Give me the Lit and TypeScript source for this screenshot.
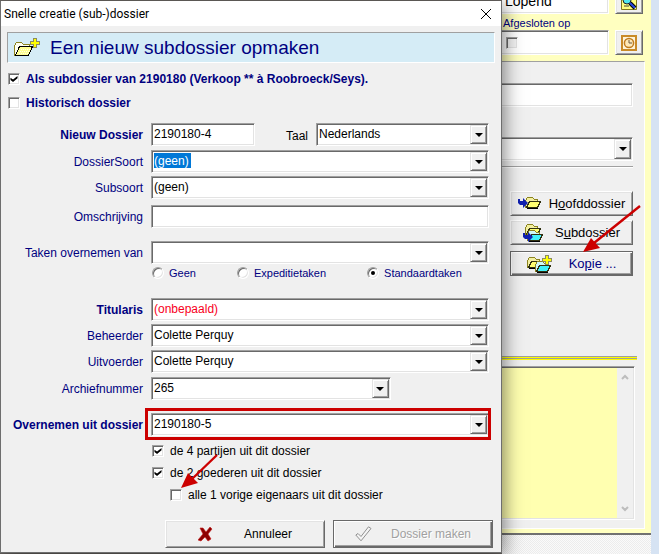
import { LitElement, html, css, svg } from "lit";
import { customElement, state } from "lit/decorators.js";

const YELLOW = "#ffff70";
const CYAN = "#40f0f8";

const folder = (x: number, y: number, front: string, back: string) => svg`
  <g transform="translate(${x} ${y})" shape-rendering="crispEdges">
    <path d="M.5 10.5V3.5L2.500.500H7.500L9.500 2.500H12.500V5.500L9.500 10.500Z" fill="${back}" stroke="#8c8420"/>
    <path d="M4.500 4.500H15.500L12.500 10.500H1.500Z" fill="${front}" stroke="#303010"/>
    <path d="M2 11.500H13" stroke="#000"/>
  </g>`;

const plus = (x: number, y: number) => svg`
  <path transform="translate(${x} ${y})" shape-rendering="crispEdges"
    d="M3.500.500H6.500V3.500H9.500V6.500H6.500V9.500H3.500V6.500H.500V3.500H3.500Z" fill="#ffff00" stroke="#8c8c60"/>`;

const blueArrow = (x: number, y: number) => svg`
  <path transform="translate(${x} ${y})" d="M0 1H2V3H5V0L10 5L5 10V7H2L0 5Z" fill="#1020b0"/>`;

const newIcon = html`<svg width="26" height="20" viewBox="0 0 26 20" aria-hidden="true">
  <g shape-rendering="crispEdges">
    <path d="M.5 17.500V7.500L2.500 4.500H7.500L9.500 6.500H15.500V9.500L10 17.500Z" fill="#fffff0" stroke="#8c8420"/>
    <path d="M5.500 8.500H18.500L14.500 17.500H1.500Z" fill="#ffff90" stroke="#000"/>
    <path d="M7 11H16M6 13H15M5 15H14" stroke="#ffffe8" stroke-dasharray="1 1"/>
  </g>${plus(16, 0)}</svg>`;

const mainIcon = html`<svg width="23" height="14" viewBox="0 0 23 14" aria-hidden="true">
  ${folder(7, 0, YELLOW, "#f4f0a0")}${blueArrow(0, 1)}</svg>`;

const subIcon = html`<svg width="20" height="18" viewBox="0 0 20 18" aria-hidden="true">
  ${folder(2, 0, YELLOW, "#f4f0a0")}${folder(4, 6, CYAN, "#d0f8f8")}${blueArrow(0, 8)}</svg>`;

const copyIcon = html`<svg width="26" height="18" viewBox="0 0 26 18" aria-hidden="true">
  ${folder(0, 2, YELLOW, "#f4f0a0")}${folder(8, 6, CYAN, "#d0f8f8")}${plus(15, 0)}</svg>`;

const searchIcon = html`<svg width="16" height="16" viewBox="0 0 16 16" aria-hidden="true">
  <path d="M.5.5H15.500V15.500H.500Z" fill="#ffff80" stroke="#807820"/>
  <path d="M3 12H8" stroke="#404040"/>
  <circle cx="6" cy="6" r="4" fill="#50e8f0" stroke="#222"/>
  <path d="M9 9L14 14" stroke="#000" stroke-width="4"/>
  <path d="M9 9L14 14" stroke="#2848e0" stroke-width="2"/></svg>`;

const clockIcon = html`<svg width="16" height="16" viewBox="0 0 16 16" aria-hidden="true">
  <path d="M1 1H15V15H1Z" fill="#fff4d8" stroke="#c98a28" stroke-width="2"/>
  <circle cx="8" cy="8" r="4.600" fill="#ffe9b8" stroke="#c07c20" stroke-width="1.500"/>
  <path d="M8 5V8H11" fill="none" stroke="#6a5840"/></svg>`;

const crossIcon = html`<svg width="15" height="15" viewBox="0 0 15 15" aria-hidden="true">
  <path d="M2 1L5 1L8 5L12 0L14 2L10 7L13 12L10 14L7 10L3 14L0 13L5 7Z" fill="#8c0000" stroke="#c81818" stroke-width=".6"/></svg>`;

const checkIcon = html`<svg width="17" height="16" viewBox="0 0 17 16" aria-hidden="true">
  <path d="M.8 9L3 7.500L6 10.500L13.500.800L16 2.500L6 14.800Z" fill="#f4f4f4" stroke="#909090"/></svg>`;

interface Field {
  id: string;
  label: string;
  value: string;
  space: string;
  cls?: string;
  strong?: boolean;
}

@customElement("app-root")
export class AppRoot extends LitElement {
  @state() private tasks = "Standaardtaken";

  static styles = css`
    :host {
      display: flex;
      min-height: 100vh;
      box-sizing: border-box;
      padding-top: 1px;
      overflow: hidden;
      background: #6c6864;
      color: #000;
      font: 12px/14px "Liberation Sans", Arial, sans-serif;
    }
    * { box-sizing: border-box; }
    svg { display: block; flex: none; }
    h1, h2 { margin: 0; font-weight: normal; }
    input, select, textarea, button { font: inherit; color: inherit; margin: 0; border-radius: 0; }

    .dialog {
      position: relative;
      z-index: 1;
      flex: 1;
      min-width: 0;
      align-self: flex-start;
      background: #f0f0f0;
      border: solid #6e6e6e;
      border-width: 0 1px 1px;
      box-shadow: 2px 4px 18px rgba(0, 0, 0, 0.5);
      padding-bottom: 4px;
    }
    .titlebar {
      display: flex;
      align-items: center;
      justify-content: space-between;
      height: 25px;
      padding: 0 8px 0 3px;
      background: #fff;
    }
    .titlebar h1 { font: 12px/16px Roboto, sans-serif; }
    .close { display: block; border: 0; padding: 0; background: none; }
    .banner {
      display: flex;
      align-items: center;
      gap: 10px;
      height: 31px;
      margin: 6px 6px 0;
      padding-left: 6px;
      background: #d5ecf6;
      border: 1px solid;
      border-color: #a0a0a0 #fff #fff #a0a0a0;
      color: #000080;
    }
    .banner h2 { font-size: 19px; line-height: 24px; }
    .navy { color: #000080; }
    .strong { font-weight: bold; }

    .checks { display: flex; flex-direction: column; align-items: flex-start; gap: 8px; }
    .heads { margin: 9px 7px 0; gap: 10px; }
    .check { display: flex; align-items: center; gap: 6px; }
    .nested { margin-left: 18px; }
    .box, .radio input {
      appearance: none;
      display: grid;
      place-items: center;
      flex: none;
      width: 12px;
      height: 12px;
      background: #fff;
      border: 1px solid;
      border-color: #a0a0a0 #fff #fff #a0a0a0;
      box-shadow: inset 1px 1px #696969, inset -1px -1px #e3e3e3;
    }
    .box:checked::before {
      content: "";
      width: 8px;
      height: 6px;
      background: #000;
      clip-path: polygon(6% 28%, 38% 60%, 94% 0, 94% 36%, 38% 100%, 6% 66%);
    }
    .radio { display: flex; align-items: center; gap: 5px; font-size: 11px; }
    .radio input { border-radius: 50%; }
    .radio input:checked::before {
      content: "";
      width: 4px;
      height: 4px;
      border-radius: 50%;
      background: #000;
    }

    .form { display: flex; flex-direction: column; padding: 0 12px 0 6px; }
    .row { display: grid; grid-template-columns: 136px 1fr; column-gap: 8px; align-items: center; }
    .row > label { text-align: right; padding-top: 1px; white-space: nowrap; color: #000080; }
    .s { margin-top: 3px; }
    .m { margin-top: 4px; }
    .l { margin-top: 6px; }
    .xl { margin-top: 13px; }
    .xxl { margin-top: 18px; }
    .field {
      display: flex;
      min-width: 0;
      height: 23px;
      padding: 1px;
      background: #fff;
      border: 1px solid;
      border-color: #a0a0a0 #fff #fff #a0a0a0;
      box-shadow: inset 1px 1px #696969, inset -1px -1px #e3e3e3;
    }
    .text, .field select {
      appearance: none;
      flex: 1;
      min-width: 0;
      width: 100%;
      border: 0;
      outline: 0;
      padding: 0 0 1px 1px;
      background: transparent;
    }
    .red select { color: #f8001c; }
    .picked select {
      color: #fff;
      background: linear-gradient(#0078d7, #0078d7) 1px 1px / 37px 15px no-repeat;
    }
    .drop {
      display: grid;
      place-items: center;
      flex: none;
      width: 17px;
      margin-left: -17px;
      pointer-events: none;
      background: #f0f0f0;
      border: 1px solid;
      border-color: #e3e3e3 #696969 #696969 #e3e3e3;
      box-shadow: inset 1px 1px #fff, inset -1px -1px #a0a0a0;
    }
    .drop::before { content: ""; border: solid transparent; border-width: 4px 4px 0; border-top-color: #000; }
    .pair { display: flex; align-items: center; }
    .number { flex: 0 1 104px; }
    .pair label { margin: 2px 8px 0 auto; }
    .language { flex: 0 1 173px; }
    .archive { width: 71%; }
    .radios { display: flex; gap: 41px; margin: 2px 0 0 151px; }
    .marked { position: relative; }
    .marked::after {
      content: "";
      position: absolute;
      inset: -6px -3px -5px -7px;
      border: 3px solid #cc0000;
      pointer-events: none;
    }

    .copies { position: relative; margin: 8px 0 0 151px; }
    .pointer { position: absolute; pointer-events: none; }
    .pointer-check { left: 28px; top: 10px; }

    .button {
      display: flex;
      align-items: center;
      justify-content: center;
      padding: 0;
      background: #f0f0f0;
      border: 1px solid;
      border-color: #fff #696969 #696969 #fff;
      box-shadow: inset 1px 1px #e3e3e3, inset -1px -1px #a0a0a0;
    }
    .default {
      border-color: #696969;
      box-shadow: inset 1px 1px #fff, inset -1px -1px #696969, inset -2px -2px #a0a0a0;
    }
    .actions { display: flex; justify-content: flex-end; gap: 8px; margin: 18px 8px 0 0; }
    .actions .button { width: 160px; height: 28px; }
    .wide { gap: 31px; }
    .roomy { gap: 19px; }
    .off { color: #a0a0a0; text-shadow: 1px 1px #fff; }

    .side { flex: 0 0 157px; min-width: 0; display: flex; background: #d6e3f3; margin-top: -1px; overflow: hidden; }
    .pane { flex: 0 0 149px; min-width: 0; display: flex; flex-direction: column; background: #ffffc0; }
    .status {
      display: grid;
      grid-template-columns: minmax(0, 1fr) 28px;
      column-gap: 6px;
      margin: -11px 8px 0 -2px;
    }
    .status .field { height: 25px; font-size: 14px; padding-left: 3px; align-items: center; }
    .status .button { height: 25px; }
    .cap { grid-column: 1 / -1; padding: 3px 0 0 3px; height: 16px; font-size: 11px; line-height: 13px; }
    .status .box { background: #f4f4f4; margin-left: 2px; }
    .sheet {
      flex: 1;
      display: flex;
      flex-direction: column;
      margin: 6px 6px 4px 0;
      padding: 21px 11px 0 0;
      background: #f0f0f0;
      border: solid;
      border-width: 1px 1px 1px 0;
      border-color: #a0a0a0 #fff #fff;
    }
    .sheet > .field { margin-left: -2px; height: 24px; }
    .sheet > .second { margin-top: 30px; }
    .rule { height: 2px; margin-top: 5px; background: #a0a0a0; border-bottom: 1px solid #fff; }
    .tools { position: relative; display: flex; flex-direction: column; gap: 4px; margin: 23px 0 0 8px; font-size: 13px; }
    .tools .button { height: 25px; }
    .tools .default { margin-top: 2px; color: #000080; }
    .g8 { gap: 8px; }
    .g12 { gap: 12px; }
    .g16 { gap: 16px; }
    .pointer-copy { left: 72px; top: 13px; }
    .double {
      height: 4px;
      margin: 80px -4px 0 0;
      background: repeating-linear-gradient(#a0a0a0 0 1px, #ffff00 1px 2px);
    }
    .notes {
      flex: 1;
      display: flex;
      min-height: 80px;
      margin: 6px -2px 8px -2px;
      padding: 1px;
      background: #f0f0f0;
      border: 1px solid;
      border-color: #a0a0a0 #fff #fff #a0a0a0;
      box-shadow: inset 1px 1px #696969, inset -1px -1px #e3e3e3;
    }
    .notes textarea { flex: 1; min-width: 0; resize: none; border: 0; outline: 0; background: #ffffb0; }
    .scroll { display: flex; flex-direction: column; justify-content: space-between; padding: 6px 4px; }
    .foot {
      height: 21px;
      border-top: 2px solid #707070;
      background: repeating-conic-gradient(#ececec 0 25%, #fafafa 0 50%) 0 0 / 2px 2px;
    }
  `;

  private select(f: Field, extra = "") {
    return html`<span class="field ${extra} ${f.cls ?? ""}">
      <select id=${f.id} aria-label=${f.label}><option>${f.value}</option></select><span class="drop"></span>
    </span>`;
  }

  private row(f: Field) {
    return html`<div class="row ${f.space}">
      <label for=${f.id} class=${f.strong ? "strong" : ""}>${f.label}</label>${this.select(f)}
    </div>`;
  }

  private check(text: string, checked: boolean, cls = "") {
    return html`<label class="check ${cls}"><input class="box" type="checkbox" .checked=${checked} />${text}</label>`;
  }

  render() {
    return html`
      <section class="dialog" role="dialog" aria-labelledby="title">
        <header class="titlebar">
          <h1 id="title">Snelle creatie (sub-)dossier</h1>
          <button class="close" aria-label="Sluiten">
            <svg width="14" height="12" viewBox="0 0 14 12"><path d="M2 1L12 11M12 1L2 11" stroke="#000" /></svg>
          </button>
        </header>
        <div class="banner">${newIcon}<h2>Een nieuw subdossier opmaken</h2></div>
        <div class="checks heads navy strong">
          ${this.check("Als subdossier van 2190180 (Verkoop ** à Roobroeck/Seys).", true)}
          ${this.check("Historisch dossier", false)}
        </div>
        <div class="form">
          <div class="row xl">
            <label for="nr" class="strong">Nieuw Dossier</label>
            <div class="pair">
              <span class="field number"><input class="text" id="nr" type="text" value="2190180-4" /></span>
              <label for="lang">Taal</label>
              ${this.select({ id: "lang", label: "Taal", value: "Nederlands", space: "" }, "language")}
            </div>
          </div>
          ${this.row({ id: "kind", label: "DossierSoort", value: "(geen)", space: "m", cls: "picked" })}
          ${this.row({ id: "sub", label: "Subsoort", value: "(geen)", space: "s" })}
          <div class="row l">
            <label for="desc">Omschrijving</label>
            <span class="field"><input class="text" id="desc" type="text" /></span>
          </div>
          ${this.row({ id: "from", label: "Taken overnemen van", value: "", space: "xl" })}
        </div>
        <div class="radios navy">
          ${["Geen", "Expeditietaken", "Standaardtaken"].map(
            (t) => html`<label class="radio"
              ><input type="radio" name="tasks" .checked=${this.tasks === t} @change=${() => (this.tasks = t)} />${t}</label
            >`
          )}
        </div>
        <div class="form">
          ${this.row({ id: "tit", label: "Titularis", value: "(onbepaald)", space: "xxl", cls: "red", strong: true })}
          ${this.row({ id: "beh", label: "Beheerder", value: "Colette Perquy", space: "s" })}
          ${this.row({ id: "uit", label: "Uitvoerder", value: "Colette Perquy", space: "s" })}
          ${this.row({ id: "arch", label: "Archiefnummer", value: "265", space: "m", cls: "archive" })}
          ${this.row({ id: "src", label: "Overnemen uit dossier", value: "2190180-5", space: "xl", cls: "marked", strong: true })}
        </div>
        <div class="checks copies">
          ${this.check("de 4 partijen uit dit dossier", true)}
          ${this.check("de 2 goederen uit dit dossier", true)}
          ${this.check("alle 1 vorige eigenaars uit dit dossier", false, "nested")}
          <svg class="pointer pointer-check" width="40" height="36" viewBox="0 0 40 36" aria-hidden="true">
            <path d="M37 1L12 25" stroke="#cc0000" stroke-width="2.400" />
            <path d="M1 34L8 19L18 29Z" fill="#cc0000" />
          </svg>
        </div>
        <div class="actions">
          <button class="button wide">${crossIcon}<span>Annuleer</span></button>
          <button class="button default roomy off" disabled>${checkIcon}<span>Dossier maken</span></button>
        </div>
      </section>

      <aside class="side">
        <div class="pane">
          <div class="status">
            <span class="field"><input class="text" type="text" aria-label="Status" value="Lopend" /></span>
            <button class="button" aria-label="Zoeken">${searchIcon}</button>
            <label class="cap navy" for="closed">Afgesloten op</label>
            <span class="field"><input id="closed" type="checkbox" class="box" /></span>
            <button class="button" aria-label="Datum">${clockIcon}</button>
          </div>
          <div class="sheet">
            <span class="field"><input class="text" type="text" aria-label="Naam" /></span>
            ${this.select({ id: "type", label: "Type", value: "", space: "" }, "second")}
            <div class="rule"></div>
            <div class="tools">
              <button class="button g8">${mainIcon}<span>H<u>o</u>ofddossier</span></button>
              <button class="button g12">${subIcon}<span>S<u>u</u>bdossier</span></button>
              <button class="button default g16">${copyIcon}<span>Ko<u>p</u>ie ...</span></button>
              <svg class="pointer pointer-copy" width="60" height="50" viewBox="0 0 60 50" aria-hidden="true">
                <path d="M58 2L12 39" stroke="#cc0000" stroke-width="2.400" />
                <path d="M1 48L9 34L18 44Z" fill="#cc0000" />
              </svg>
            </div>
            <div class="double"></div>
            <div class="notes">
              <textarea aria-label="Nota"></textarea>
              <div class="scroll">
                <svg width="8" height="7" viewBox="0 0 8 7"><path d="M1 5L4 2L7 5" fill="none" stroke="#bdbdbd" stroke-width="2" /></svg>
                <svg width="8" height="7" viewBox="0 0 8 7"><path d="M1 2L4 5L7 2" fill="none" stroke="#bdbdbd" stroke-width="2" /></svg>
              </div>
            </div>
          </div>
          <div class="foot"></div>
        </div>
      </aside>
    `;
  }
}
